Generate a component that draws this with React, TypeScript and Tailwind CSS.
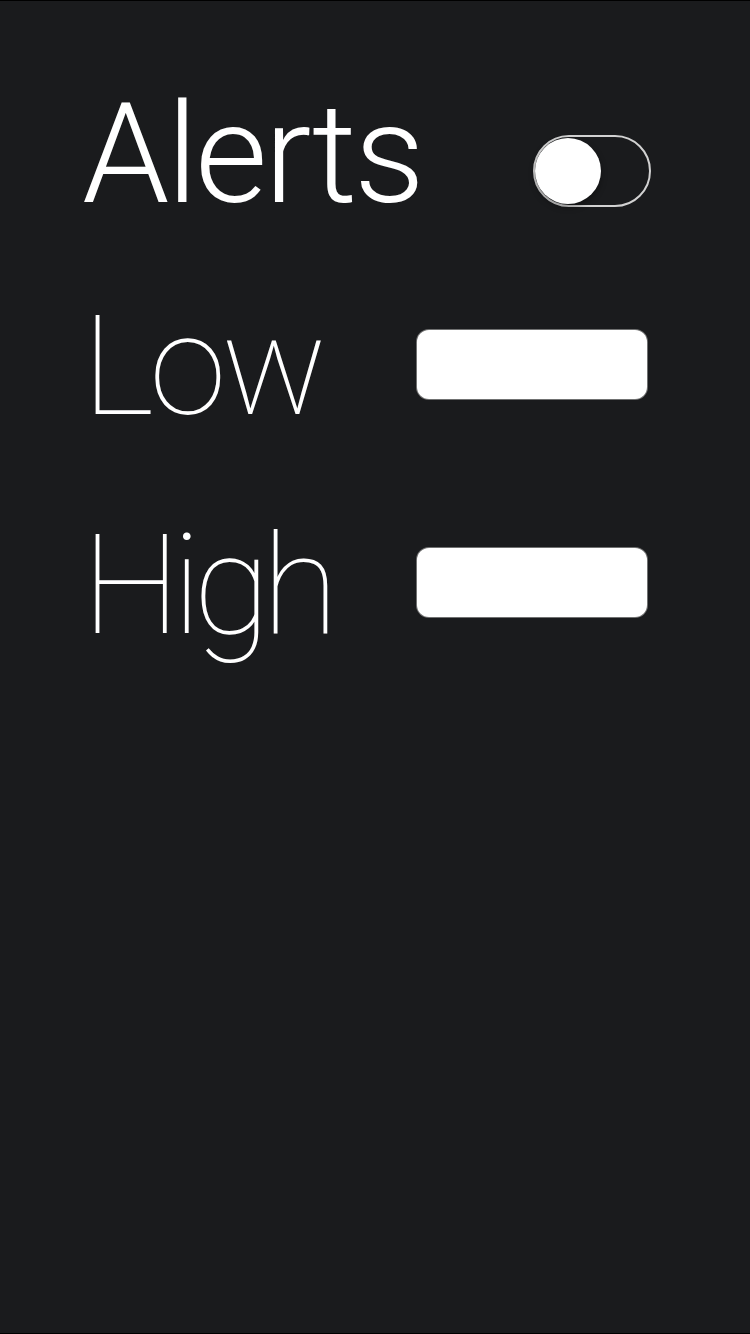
const rows = [
  { label: "Low", top: "mt-[72px]", field: "mt-[34px]", track: "tracking-[-5px]" },
  { label: "High", top: "mt-[79px]", field: "mt-[33px]", track: "tracking-[-8px]" },
];

function Toggle() {
  return (
    <div className="mt-[51px] flex h-[72px] w-[118px] items-center rounded-full border-2 border-[#d2d2d2] bg-[#1a1b1d]">
      <div className="h-[66px] w-[66px] rounded-full bg-white shadow-[0_3px_6px_rgba(0,0,0,0.35)]" />
    </div>
  );
}

export default function App() {
  return (
    <div className="flex h-[1334px] w-[750px] flex-col border-y border-black bg-[#1a1b1d] pl-[82px] pr-[99px] pt-[83px] text-white">
      <div className="flex items-start justify-between">
        <h1 className="font-['Roboto',sans-serif] text-[140px] font-light leading-none tracking-[-3px]">
          Alerts
        </h1>
        <Toggle />
      </div>
      {rows.map((row) => (
        <div key={row.label} className={`flex items-start justify-between ${row.top}`}>
          <span className={`font-['Roboto',sans-serif] text-[140px] font-thin leading-none ${row.track}`}>
            {row.label}
          </span>
          <input
            type="text"
            aria-label={row.label}
            className={`mr-[4px] h-[69px] w-[230px] rounded-[12px] bg-white shadow-[0_0_0_1px_rgba(150,150,150,0.7)] outline-none ${row.field}`}
          />
        </div>
      ))}
    </div>
  );
}
